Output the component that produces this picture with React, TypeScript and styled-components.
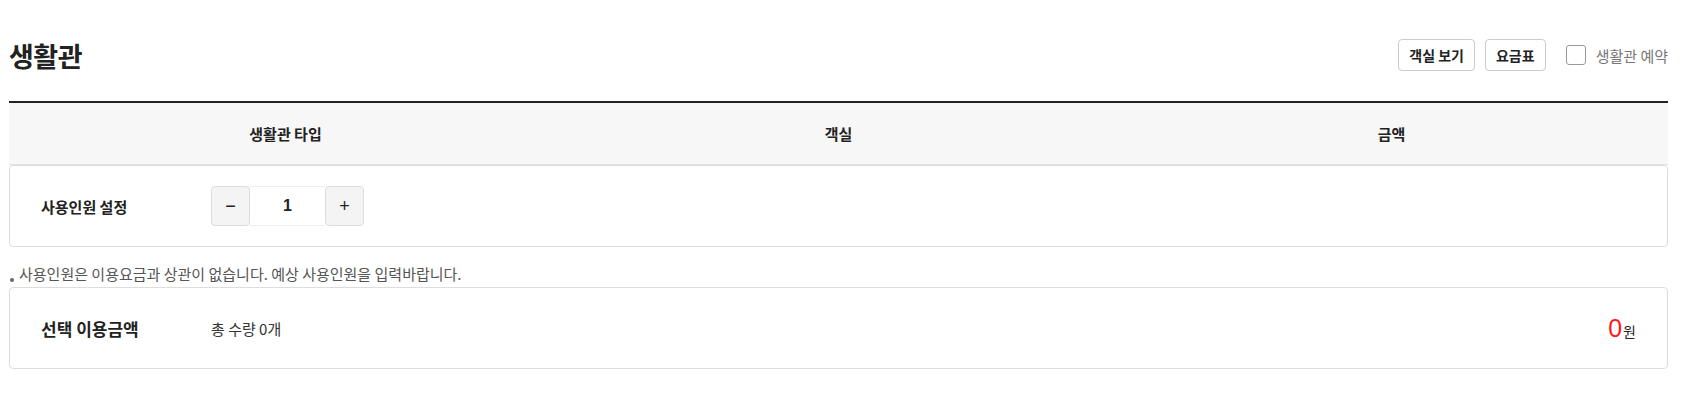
import styled, { createGlobalStyle } from "styled-components";
import { useState } from "react";

const GlobalStyle = createGlobalStyle`
  body {
    margin: 0;
    background: #fff;
    font-family: "Noto Sans CJK KR", "Noto Sans", sans-serif;
    color: #222;
  }
`;

const Page = styled.div`
  padding: 0 22px 0 9px;
`;

const TitleBar = styled.div`
  display: flex;
  align-items: center;
  justify-content: space-between;
  height: 66px;
  padding-top: 22px;
  padding-bottom: 13px;
`;

const Title = styled.h2`
  margin: 0;
  font-size: 27px;
  font-weight: 700;
  letter-spacing: -0.5px;
  color: #222;
`;

const Actions = styled.div`
  display: flex;
  align-items: center;
  gap: 10px;
`;

const OutlineButton = styled.button`
  height: 32px;
  padding: 0 10px;
  border: 1px solid #ccc;
  border-radius: 4px;
  background: #fff;
  font-family: inherit;
  font-size: 14px;
  font-weight: 700;
  color: #222;
  cursor: pointer;
`;

const CheckLabel = styled.label`
  display: flex;
  align-items: center;
  gap: 10px;
  margin-left: 10px;
  font-size: 15px;
  color: #777;
  cursor: pointer;
`;

const CheckBox = styled.span<{ $checked: boolean }>`
  width: 18px;
  height: 18px;
  border: 1px solid #999;
  border-radius: 3px;
  background: ${({ $checked }) => ($checked ? "#222" : "#fff")};
`;

const TableHead = styled.div`
  display: grid;
  grid-template-columns: repeat(3, 1fr);
  align-items: center;
  height: 61px;
  border-top: 2px solid #222;
  border-bottom: 1px solid #e2e2e2;
  background: #f7f7f7;
`;

const HeadCell = styled.div`
  text-align: center;
  font-size: 15px;
  font-weight: 700;
  color: #222;
`;

const Card = styled.div`
  display: flex;
  align-items: center;
  height: 80px;
  padding: 0 31px;
  border: 1px solid #ddd;
  border-radius: 4px;
`;

const CardLabel = styled.div<{ $size?: number }>`
  width: 170px;
  font-size: ${({ $size }) => $size ?? 15}px;
  font-weight: 700;
  color: #222;
`;

const Stepper = styled.div`
  display: flex;
  height: 40px;
`;

const StepButton = styled.button`
  width: 39px;
  border: 1px solid #ddd;
  border-radius: 4px;
  background: #f4f4f4;
  font-family: "Liberation Sans", sans-serif;
  font-size: 18px;
  color: #222;
  cursor: pointer;
`;

const StepValue = styled.div`
  width: 75px;
  display: flex;
  align-items: center;
  justify-content: center;
  border-top: 1px solid #eee;
  border-bottom: 1px solid #eee;
  font-family: "Liberation Sans", sans-serif;
  font-size: 16px;
  font-weight: 700;
  color: #222;
`;

const Note = styled.p`
  position: relative;
  margin: 17px 0 3px;
  padding-left: 10px;
  font-size: 15px;
  color: #555;
  line-height: 20px;

  &::before {
    content: "";
    position: absolute;
    left: 1px;
    top: 14px;
    width: 4px;
    height: 4px;
    border-radius: 50%;
    background: #666;
  }
`;

const Quantity = styled.div`
  font-size: 15px;
  color: #333;
`;

const Total = styled.div`
  margin-left: auto;
  display: flex;
  align-items: baseline;
  gap: 1px;
`;

const Amount = styled.span`
  font-family: "Liberation Sans", sans-serif;
  font-size: 25px;
  color: #ff1a1a;
`;

const Won = styled.span`
  font-size: 14px;
  color: #222;
`;

export default function App() {
  const [count, setCount] = useState(1);
  const [reserve, setReserve] = useState(false);

  return (
    <Page>
      <GlobalStyle />
      <TitleBar>
        <Title>생활관</Title>
        <Actions>
          <OutlineButton>객실 보기</OutlineButton>
          <OutlineButton>요금표</OutlineButton>
          <CheckLabel onClick={() => setReserve(!reserve)}>
            <CheckBox $checked={reserve} />
            생활관 예약
          </CheckLabel>
        </Actions>
      </TitleBar>
      <TableHead>
        <HeadCell>생활관 타입</HeadCell>
        <HeadCell>객실</HeadCell>
        <HeadCell>금액</HeadCell>
      </TableHead>
      <Card>
        <CardLabel>사용인원 설정</CardLabel>
        <Stepper>
          <StepButton onClick={() => setCount(Math.max(1, count - 1))}>−</StepButton>
          <StepValue>{count}</StepValue>
          <StepButton onClick={() => setCount(count + 1)}>+</StepButton>
        </Stepper>
      </Card>
      <Note>사용인원은 이용요금과 상관이 없습니다. 예상 사용인원을 입력바랍니다.</Note>
      <Card>
        <CardLabel $size={17}>선택 이용금액</CardLabel>
        <Quantity>총 수량 0개</Quantity>
        <Total>
          <Amount>0</Amount>
          <Won>원</Won>
        </Total>
      </Card>
    </Page>
  );
}
